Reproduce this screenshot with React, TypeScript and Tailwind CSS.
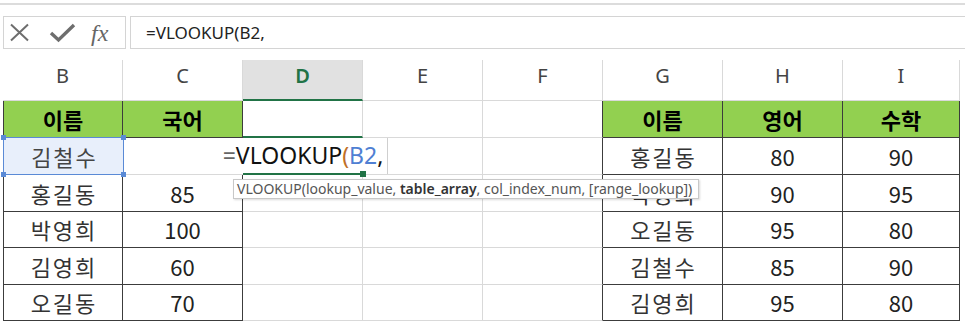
import React from "react";

// Excel-like sheet: formula bar, column headers and two small tables
// with an in-cell VLOOKUP being edited in D3.

const DARK = "border-[#3c3c3c]";
const LIGHT = "border-[#d9d9d9]";

const COLS = ["B", "C", "D", "E", "F", "G", "H", "I"];
const ROW_H = ["h-[37px]", "h-[37px]", "h-[37px]", "h-[36px]", "h-[37px]", "h-[36px]"];

const left = [
  ["김철수", ""],
  ["홍길동", "85"],
  ["박영희", "100"],
  ["김영희", "60"],
  ["오길동", "70"],
];
const right = [
  ["홍길동", "80", "90"],
  ["박영희", "90", "95"],
  ["오길동", "95", "80"],
  ["김철수", "85", "90"],
  ["김영희", "95", "80"],
];

function Cell({
  children,
  className = "",
}: {
  children?: React.ReactNode;
  className?: string;
}) {
  return (
    <div className={`flex items-center justify-center border-r border-b ${className}`}>
      {children}
    </div>
  );
}

// hangul in the sheet is spaced a little wider than the font's default
function Name({ text }: { text: string }) {
  return <span className="tracking-[2px] pl-[2px]">{text}</span>;
}

function FormulaBar() {
  return (
    <div className="mt-[11px] flex h-[33px]">
      <div className="ml-[3px] flex w-[123px] items-center border border-[#d4d4d4] pl-[5px] text-[#6e6e6e]">
        <svg width="21" height="19" viewBox="0 0 21 19">
          <path d="M2 1.5 L19 17.5 M19 1.5 L2 17.5" stroke="currentColor" strokeWidth="2" />
        </svg>
        <svg width="27" height="20" viewBox="0 0 27 20" className="ml-[19px]">
          <path d="M2 10 L9.5 17 L25 2" stroke="currentColor" strokeWidth="3.4" fill="none" />
        </svg>
        <span className="ml-[15px] font-['Liberation_Serif',serif] text-[24px] italic leading-none text-[#666]">
          fx
        </span>
      </div>
      <div className="ml-[4px] flex flex-1 items-center border border-r-0 border-[#d4d4d4] pl-[15px] font-['Noto_Sans',sans-serif] text-[17px] text-[#222]">
        =VLOOKUP(B2,
      </div>
    </div>
  );
}

function ColumnHeaders() {
  return (
    <div className="mt-[11px] grid h-[41px] grid-cols-[120px_120px_120px_120px_120px_120px_120px_117px] pl-[3px] font-['Noto_Sans',sans-serif] text-[20px]">
      {COLS.map((c) =>
        c === "D" ? (
          <div
            key={c}
            className="flex items-center justify-center border-b-2 border-r border-b-[#217346] border-r-[#d9d9d9] bg-[#e1e1e1] pb-[7px] font-semibold text-[#217346]"
          >
            {c}
          </div>
        ) : (
          <div
            key={c}
            className="flex items-center justify-center border-r border-b border-[#d9d9d9] pb-[8px] text-[#444]"
          >
            {c}
          </div>
        )
      )}
    </div>
  );
}

function Corner({ pos }: { pos: string }) {
  return <span className={`absolute h-[5px] w-[5px] bg-[#5a8ad6] ${pos}`} />;
}

export default function App() {
  return (
    <div className="h-[322px] w-[965px] overflow-hidden bg-white font-['Noto_Sans_CJK_KR','Noto_Sans',sans-serif]">
      <div className="h-[3px]" />
      <div className="border-t-2 border-[#dcdcdc]" />
      <FormulaBar />
      <ColumnHeaders />

      <div className="relative grid grid-cols-[120px_120px_120px_120px_120px_120px_120px_117px] pl-[3px] text-[22px] text-[#333]">
        {/* row 2: headers */}
        <Cell className={`${ROW_H[0]} border-l ${DARK} bg-[#92d050] font-bold text-black`}>이름</Cell>
        <Cell className={`${ROW_H[0]} ${DARK} bg-[#92d050] font-bold text-black`}>국어</Cell>
        <Cell className={`${ROW_H[0]} border-b-2 border-r-[#d9d9d9] border-b-[#217346]`} />
        <Cell className={`${ROW_H[0]} ${LIGHT}`} />
        <Cell className={`${ROW_H[0]} border-b-[#d9d9d9] border-r-[#3c3c3c]`} />
        <Cell className={`${ROW_H[0]} ${DARK} bg-[#92d050] font-bold text-black`}>이름</Cell>
        <Cell className={`${ROW_H[0]} ${DARK} bg-[#92d050] font-bold text-black`}>영어</Cell>
        <Cell className={`${ROW_H[0]} ${DARK} bg-[#92d050] font-bold text-black`}>수학</Cell>

        {left.map((l, i) => {
          const h = ROW_H[i + 1];
          const r = right[i];
          const editing = i === 0;
          return (
            <React.Fragment key={i}>
              {editing ? (
                <div className={`relative flex ${h} items-center justify-center border-b border-l border-[#3c3c3c] bg-[#e8effb] text-[#444]`}>
                  <span className="pointer-events-none absolute inset-[-1px] border border-[#5a8ad6]" />
                  <Corner pos="left-[-3px] top-[-3px]" />
                  <Corner pos="right-[-3px] top-[-3px]" />
                  <Corner pos="left-[-3px] bottom-[-3px]" />
                  <Corner pos="right-[-3px] bottom-[-3px]" />
                  <Name text={l[0]} />
                </div>
              ) : (
                <Cell className={`${h} border-l ${DARK}`}>
                  <Name text={l[0]} />
                </Cell>
              )}
              {editing ? (
                <div className={`${h} border-b border-[#d9d9d9]`} />
              ) : (
                <Cell className={`${h} ${DARK} text-[#222]`}>{l[1]}</Cell>
              )}
              {editing ? (
                <div className={`relative flex ${h} items-center justify-center border-b-2 border-[#217346]`}>
                  <span className="whitespace-nowrap text-[23px] font-['Noto_Sans',sans-serif] leading-none">
                    <span className="text-[#666]">=</span>
                    <span className="text-[#111]">VLOOKUP</span>
                    <span className="text-[#c07028]">(</span>
                    <span className="text-[#4f7fd3]">B2</span>
                    <span className="text-[#111]">,</span>
                  </span>
                  <span className="absolute bottom-[-4px] right-[-3px] h-[6px] w-[6px] bg-[#217346]" />
                </div>
              ) : (
                <Cell className={`${h} ${LIGHT}`} />
              )}
              <Cell className={`${h} ${LIGHT} justify-start`}>
                {editing && <div className="h-full w-[25px] border-r border-[#cfcfcf]" />}
              </Cell>
              <Cell className={`${h} border-b-[#d9d9d9] border-r-[#3c3c3c]`} />
              <Cell className={`${h} ${DARK}`}>
                <Name text={r[0]} />
              </Cell>
              <Cell className={`${h} ${DARK} text-[#222]`}>{r[1]}</Cell>
              <Cell className={`${h} ${DARK} text-[#222]`}>{r[2]}</Cell>
            </React.Fragment>
          );
        })}

        {/* function argument tooltip */}
        <div className="absolute left-[233px] top-[78px] z-10 flex h-[20px] w-[466px] items-center border border-[#c8c8c8] bg-white pl-[3px] font-['Noto_Sans',sans-serif] text-[14px] leading-none text-[#555] shadow-[1px_1px_2px_rgba(0,0,0,0.15)]">
          <span className="whitespace-nowrap">
            VLOOKUP(lookup_value, <b className="font-semibold text-[#333]">table_array</b>, col_index_num, [range_lookup])
          </span>
        </div>
      </div>
    </div>
  );
}
